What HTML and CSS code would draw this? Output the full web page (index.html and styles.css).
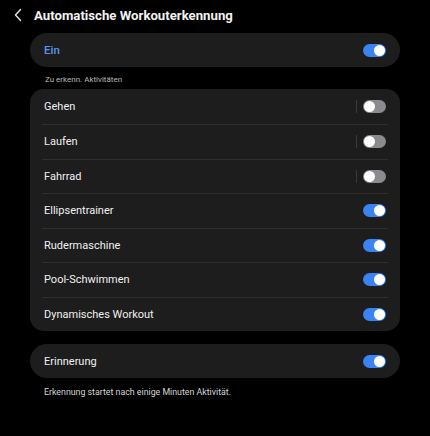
FILE: index.html
```html
<!DOCTYPE html>
<html lang="de">
<head>
<meta charset="utf-8">
<link rel="stylesheet" href="styles.css">
</head>
<body>
<div class="page">
  <header class="header">
    <svg class="back" width="10" height="14" viewBox="0 0 10 14"><path d="M7.5 1.5 L2.5 7 L7.5 12.5" fill="none" stroke="#e6e6e6" stroke-width="1.4" stroke-linecap="round" stroke-linejoin="round"/></svg>
    <h1 class="title">Automatische Workouterkennung</h1>
  </header>

  <div class="card pill">
    <div class="row">
      <span class="label on-label">Ein</span>
      <span class="toggle on"><span class="knob"></span></span>
    </div>
  </div>

  <div class="section">Zu erkenn. Aktivitäten</div>

  <div class="card list">
    <div class="row"><span class="label">Gehen</span><span class="sep"></span><span class="toggle"><span class="knob"></span></span></div>
    <div class="row"><span class="label">Laufen</span><span class="sep"></span><span class="toggle"><span class="knob"></span></span></div>
    <div class="row"><span class="label">Fahrrad</span><span class="sep"></span><span class="toggle"><span class="knob"></span></span></div>
    <div class="row"><span class="label">Ellipsentrainer</span><span class="toggle on"><span class="knob"></span></span></div>
    <div class="row"><span class="label">Rudermaschine</span><span class="toggle on"><span class="knob"></span></span></div>
    <div class="row"><span class="label">Pool-Schwimmen</span><span class="toggle on"><span class="knob"></span></span></div>
    <div class="row"><span class="label">Dynamisches Workout</span><span class="toggle on"><span class="knob"></span></span></div>
  </div>

  <div class="card pill reminder">
    <div class="row">
      <span class="label">Erinnerung</span>
      <span class="toggle on"><span class="knob"></span></span>
    </div>
  </div>

  <p class="note">Erkennung startet nach einige Minuten Aktivität.</p>
</div>
</body>
</html>
```
FILE: styles.css
```css
html, body {
  margin: 0;
  padding: 0;
  background: #000;
}
body {
  font-family: Roboto, "Noto Sans", "Liberation Sans", sans-serif;
  color: #ececec;
  width: 430px;
  height: 436px;
  overflow: hidden;
}
.page {
  padding: 0 30px;
}
.header {
  display: flex;
  align-items: center;
  height: 30px;
  margin: 0 -30px;
  padding-left: 13px;
}
.back {
  display: block;
  margin-right: 11px;
}
.title {
  margin: 0;
  font-size: 13.2px;
  font-weight: 700;
  color: #f2f2f2;
}
.card {
  background: #1d1d1d;
}
.pill {
  margin-top: 3px;
  height: 34px;
  border-radius: 17px;
  display: flex;
  flex-direction: column;
  justify-content: center;
}
.row {
  display: flex;
  align-items: center;
  height: 34px;
  padding: 0 14px 0 14px;
}
.label {
  flex: 1;
  font-size: 11px;
  color: #f0f0f0;
}
.on-label {
  color: #5b95f0;
  font-size: 11.5px;
  font-weight: 500;
}
.section {
  font-size: 8px;
  color: #b8b8b8;
  padding: 8px 0 0 15px;
  height: 14px;
}
.list {
  border-radius: 14px;
  padding: 0 12px;
}
.list .row {
  padding: 0 2px;
  height: 34.5px;
  border-top: 1px solid #2f2f2f;
  box-sizing: border-box;
}
.list .row:first-child {
  border-top: none;
  height: 35px;
}
.sep {
  width: 1px;
  height: 13px;
  background: #3a3a3a;
  margin-right: 6px;
}
.toggle {
  position: relative;
  width: 23px;
  height: 13px;
  border-radius: 7px;
  background: #8b8b8f;
  flex: none;
}
.toggle .knob {
  position: absolute;
  top: 1px;
  left: 1px;
  width: 11px;
  height: 11px;
  border-radius: 50%;
  background: #fff;
}
.toggle.on {
  background: #3b82f2;
}
.toggle.on .knob {
  left: auto;
  right: 1px;
}
.reminder {
  margin-top: 13px;
}
.note {
  margin: 9px 0 0 14px;
  font-size: 8.8px;
  color: #d4d4d4;
}
```
